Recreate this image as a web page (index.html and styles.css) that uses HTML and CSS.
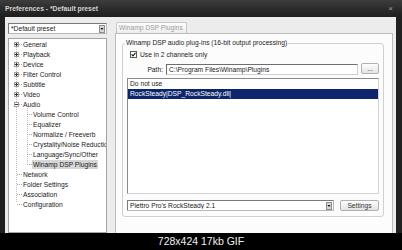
FILE: index.html
```html
<!DOCTYPE html>
<html lang="en">
  <head>
    <meta charset="UTF-8" />
    <title>Preferences - *Default preset</title>
    <link rel="stylesheet" href="styles.css">
  </head>
  <body>
    <div class="window">
      <div class="titlebar">
        <span class="title">Preferences - *Default preset</span>
        <span class="close">&times;</span>
      </div>

      <div class="client">
        <div class="sidebar">
          <div class="combo">
            <span class="combo-text">*Default preset</span>
            <svg class="combo-btn" width="6" height="8" viewBox="0 0 6 8"><rect x="0.5" y="0.5" width="5" height="7" fill="#d6d6d6" stroke="#8c8c8c"/><path d="M1.5 3h3L3 5z" fill="#111"/></svg>
          </div>

          <div class="tree">
            <div class="node"><svg class="exp" viewBox="0 0 5 5"><rect x="0.5" y="0.5" width="4" height="4" fill="#fff" stroke="#a0a0a0"/><path d="M1 2.5h3M2.5 1v3" stroke="#333"/></svg><i class="dash"></i><span>General</span></div>
            <div class="node"><svg class="exp" viewBox="0 0 5 5"><rect x="0.5" y="0.5" width="4" height="4" fill="#fff" stroke="#a0a0a0"/><path d="M1 2.5h3M2.5 1v3" stroke="#333"/></svg><i class="dash"></i><span>Playback</span></div>
            <div class="node"><svg class="exp" viewBox="0 0 5 5"><rect x="0.5" y="0.5" width="4" height="4" fill="#fff" stroke="#a0a0a0"/><path d="M1 2.5h3M2.5 1v3" stroke="#333"/></svg><i class="dash"></i><span>Device</span></div>
            <div class="node"><svg class="exp" viewBox="0 0 5 5"><rect x="0.5" y="0.5" width="4" height="4" fill="#fff" stroke="#a0a0a0"/><path d="M1 2.5h3M2.5 1v3" stroke="#333"/></svg><i class="dash"></i><span>Filter Control</span></div>
            <div class="node"><svg class="exp" viewBox="0 0 5 5"><rect x="0.5" y="0.5" width="4" height="4" fill="#fff" stroke="#a0a0a0"/><path d="M1 2.5h3M2.5 1v3" stroke="#333"/></svg><i class="dash"></i><span>Subtitle</span></div>
            <div class="node"><svg class="exp" viewBox="0 0 5 5"><rect x="0.5" y="0.5" width="4" height="4" fill="#fff" stroke="#a0a0a0"/><path d="M1 2.5h3M2.5 1v3" stroke="#333"/></svg><i class="dash"></i><span>Video</span></div>
            <div class="node"><svg class="exp" viewBox="0 0 5 5"><rect x="0.5" y="0.5" width="4" height="4" fill="#fff" stroke="#a0a0a0"/><path d="M1 2.5h3" stroke="#333"/></svg><i class="dash"></i><span>Audio</span></div>
            <div class="node child"><i class="dash"></i><span>Volume Control</span></div>
            <div class="node child"><i class="dash"></i><span>Equalizer</span></div>
            <div class="node child"><i class="dash"></i><span>Normalize / Freeverb</span></div>
            <div class="node child"><i class="dash"></i><span>Crystality/Noise Reduction</span></div>
            <div class="node child"><i class="dash"></i><span>Language/Sync/Other</span></div>
            <div class="node child"><i class="dash"></i><span class="sel">Winamp DSP Plugins</span></div>
            <div class="node leaf"><i class="dash"></i><span>Network</span></div>
            <div class="node leaf"><i class="dash"></i><span>Folder Settings</span></div>
            <div class="node leaf"><i class="dash"></i><span>Association</span></div>
            <div class="node leaf"><i class="dash"></i><span>Configuration</span></div>
          </div>
        </div>

        <div class="main">
          <div class="tabs">
            <div class="tab">Winamp DSP Plugins</div>
          </div>
          <div class="panel">
            <fieldset class="group">
              <legend>Winamp DSP audio plug-ins (16-bit output processing)</legend>

              <label class="check">
                <svg class="checkbox" width="7" height="7" viewBox="0 0 7 7"><rect x="0.5" y="0.5" width="6" height="6" fill="#fff" stroke="#5a5a5a"/><path d="M1.6 3.4l1.4 1.5 2.5-3" fill="none" stroke="#1a1a1a" stroke-width="1.1"/></svg>
                Use in 2 channels only
              </label>

              <div class="path-row">
                <span class="path-label">Path:</span>
                <div class="input">C:\Program Files\Winamp\Plugins</div>
                <button class="btn dots">...</button>
              </div>

              <div class="listbox">
                <div class="item">Do not use</div>
                <div class="item selected">RockSteady|DSP_RockSteady.dll|</div>
              </div>

              <div class="plugin-row">
                <div class="combo plugin">
                  <span class="combo-text">Piettro Pro's RockSteady 2.1</span>
                  <svg class="combo-btn" width="6" height="8" viewBox="0 0 6 8"><rect x="0.5" y="0.5" width="5" height="7" fill="#d6d6d6" stroke="#8c8c8c"/><path d="M1.5 3h3L3 5z" fill="#111"/></svg>
                </div>
                <button class="btn settings">Settings</button>
              </div>
            </fieldset>
          </div>
        </div>
      </div>
    </div>

    <div class="caption">728x424 17kb GIF</div>
  </body>
</html>
```

FILE: styles.css
```css
body {
  margin: 0;
  width: 402px;
  height: 250px;
  overflow: hidden;
  background: #000;
  font-family: "Liberation Sans", Arial, sans-serif;
  font-size: 6.7px;
  color: #1a1a1a;
}
.window {
  height: 233px;
  display: flex;
  flex-direction: column;
  background: #202020;
}
.titlebar {
  height: 17px;
  display: flex;
  align-items: center;
  justify-content: space-between;
  padding: 0 9px 0 5px;
  background: linear-gradient(#3d3d3d, #2a2a2a 55%, #1e1e1e);
  color: #d4d4d4;
  font-weight: bold;
  font-size: 6.8px;
}
.close {
  font-size: 8px;
  font-weight: normal;
  color: #a8a8a8;
}
.client {
  flex: 1;
  min-height: 0;
  display: flex;
  margin: 0 6px 0 5px;
  background: #ececec;
}
.sidebar {
  width: 99px;
  margin-left: 3px;
  padding-top: 6px;
  display: flex;
  flex-direction: column;
}
.combo {
  height: 11px;
  box-sizing: border-box;
  display: flex;
  align-items: center;
  background: #fff;
  border: 1px solid #7a7a7a;
  border-right-color: #b8b8b8;
  border-bottom-color: #b8b8b8;
}
.combo-text {
  flex: 1;
  padding-left: 2px;
  white-space: nowrap;
  overflow: hidden;
}
.combo-btn {
  flex: none;
  margin-right: 1px;
}
.tree {
  flex: 1;
  margin-top: 4px;
  border: 1px solid #a4a4a4;
  overflow: hidden;
  background:
    repeating-linear-gradient(#bdbdbd 0 1px, transparent 1px 2px) 7px 6px / 1px 158px no-repeat,
    repeating-linear-gradient(#bdbdbd 0 1px, transparent 1px 2px) 18px 67px / 1px 58px no-repeat,
    #fff;
}
.node {
  height: 10px;
  display: flex;
  align-items: center;
  padding-left: 5px;
  white-space: nowrap;
}
.exp {
  width: 5px;
  height: 5px;
  flex: none;
}
.dash {
  width: 3px;
  height: 0;
  flex: none;
  margin-right: 1px;
  border-top: 1px dotted #a8a8a8;
}
.node.leaf {
  padding-left: 8px;
}
.node.child {
  padding-left: 18px;
}
.leaf .dash,
.child .dash {
  width: 5px;
}
.sel {
  background: #d6d6d6;
  padding: 1px 1px;
  margin-left: -1px;
}
.main {
  flex: 1;
  margin: 0 4px 0 8px;
  display: flex;
  flex-direction: column;
}
.tabs {
  display: flex;
  padding: 5px 0 0 1px;
}
.tab {
  width: 71px;
  height: 11px;
  box-sizing: border-box;
  padding-left: 2px;
  line-height: 10px;
  white-space: nowrap;
  border: 1px solid #c6c6c6;
  border-bottom: none;
  border-radius: 2px 2px 0 0;
  background: linear-gradient(#fdfdfd, #ededed);
  color: #9c9c9c;
}
.panel {
  flex: 1;
  padding: 5px 8px 0 6px;
  border: 1px solid #bcbcbc;
  border-bottom: none;
  background: #fcfcfc;
}
.group {
  margin: 0;
  min-width: 0;
  padding: 0 4px 5px 4px;
  border: 1px solid #d0d0d0;
  border-radius: 3px;
}
.group legend {
  padding: 0 1px;
  margin-left: -2px;
  line-height: 8px;
  color: #1a1a1a;
}
.check {
  height: 7px;
  display: flex;
  align-items: center;
  gap: 3px;
  margin: 4px 0 0 3px;
}
.path-row {
  height: 12px;
  display: flex;
  align-items: center;
  margin-top: 5px;
}
.path-label {
  width: 36px;
  text-align: right;
}
.input {
  flex: 1;
  height: 11px;
  margin: 1px 0 0 3px;
  box-sizing: border-box;
  padding-left: 2px;
  line-height: 9px;
  white-space: nowrap;
  background: #fff;
  border: 1px solid;
  border-color: #6e6e6e #cfcfcf #cfcfcf #6e6e6e;
}
.btn {
  box-sizing: border-box;
  padding: 0;
  font: inherit;
  color: #333;
  background: linear-gradient(#fefefe, #e4e4e4);
  border: 1px solid #b0b0b0;
  border-radius: 2px;
}
.dots {
  width: 18px;
  height: 11px;
  margin: -1px 0 0 3px;
  line-height: 8px;
}
.listbox {
  height: 116px;
  box-sizing: border-box;
  margin-top: 3px;
  background: #fff;
  border: 1px solid;
  border-color: #8a8a8a #d4d4d4 #d4d4d4 #8a8a8a;
}
.item {
  height: 10px;
  line-height: 10px;
  padding-left: 2px;
  white-space: nowrap;
}
.item.selected {
  background: #0c256c;
  color: #fff;
}
.plugin-row {
  height: 11px;
  display: flex;
  margin-top: 6px;
}
.plugin {
  width: 207px;
  border-radius: 1px;
}
.settings {
  width: 39px;
  height: 11px;
  margin-left: 6px;
}
.caption {
  height: 17px;
  line-height: 17px;
  text-align: center;
  font-size: 10.5px;
  color: #f0f0f0;
}
```
